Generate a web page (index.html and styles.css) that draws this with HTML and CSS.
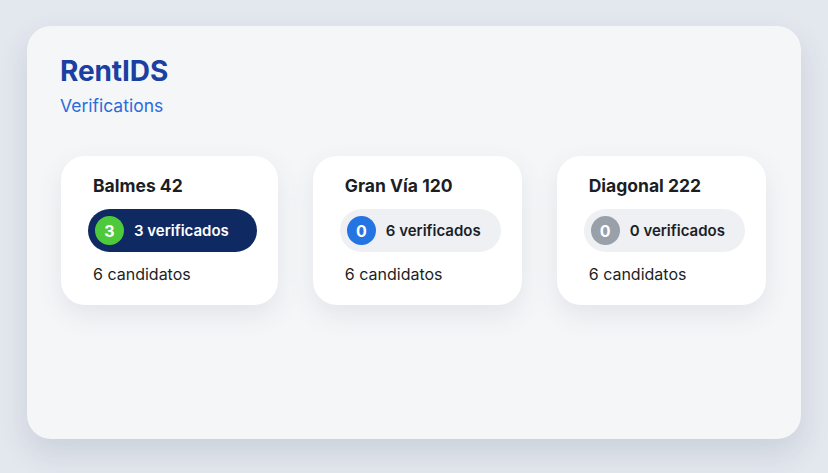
FILE: index.html
```html
<!DOCTYPE html>
<html lang="es">
<head>
<meta charset="utf-8">
<title>RentIDS</title>
<link rel="stylesheet" href="styles.css">
</head>
<body>
  <main class="panel">
    <h1 class="brand">RentIDS</h1>
    <p class="subtitle">Verifications</p>
    <section class="cards">
      <article class="card">
        <h2 class="card-title">Balmes 42</h2>
        <div class="pill pill-active">
          <span class="dot dot-green">3</span>
          <span class="pill-text">3 verificados</span>
        </div>
        <p class="count">6 candidatos</p>
      </article>
      <article class="card">
        <h2 class="card-title">Gran Vía 120</h2>
        <div class="pill">
          <span class="dot dot-blue">0</span>
          <span class="pill-text">6 verificados</span>
        </div>
        <p class="count">6 candidatos</p>
      </article>
      <article class="card">
        <h2 class="card-title">Diagonal 222</h2>
        <div class="pill">
          <span class="dot dot-gray">0</span>
          <span class="pill-text">0 verificados</span>
        </div>
        <p class="count">6 candidatos</p>
      </article>
    </section>
  </main>
</body>
</html>
```

FILE: styles.css
```css
* { box-sizing: border-box; }
html, body { height: 100%; }
body {
  margin: 0;
  padding: 26px 27px 0 27px;
  background: #e3e7ee;
  font-family: Inter, "Noto Sans", "Liberation Sans", sans-serif;
}
.panel {
  height: 413px;
  background: #f5f6f8;
  border-radius: 24px;
  padding: 28px 34px 0 33px;
  box-shadow: 0 14px 30px rgba(60, 75, 105, 0.14);
}
.brand {
  margin: 0;
  font-size: 28px;
  line-height: 34px;
  font-weight: 700;
  color: #1a40a2;
  letter-spacing: -0.1px;
}
.subtitle {
  margin: 6px 0 0 0;
  font-size: 17.5px;
  line-height: 24px;
  color: #2b6bdb;
}
.cards {
  display: flex;
  gap: 35px;
  margin-top: 38px;
  padding-left: 1px;
  align-items: flex-start;
}
.card {
  background: #ffffff;
  border-radius: 24px;
  padding: 18px 21px 21px 32px;
  box-shadow: 0 10px 26px rgba(60, 75, 105, 0.10);
  white-space: nowrap;
}
.card-title {
  margin: 0;
  font-size: 17.5px;
  line-height: 24px;
  font-weight: 700;
  color: #1b1e25;
}
.pill {
  display: inline-flex;
  align-items: center;
  gap: 10px;
  height: 43px;
  margin: 11px 0 0 -5px;
  padding: 0 20px 0 7px;
  border-radius: 22px;
  background: #eef0f3;
  color: #1b1e25;
}
.pill-active {
  background: #0f2a63;
  color: #ffffff;
  padding-right: 28px;
}
.pill-text {
  font-size: 15px;
  font-weight: 600;
  line-height: 20px;
  white-space: nowrap;
}
.dot {
  flex: none;
  width: 29px;
  height: 29px;
  border-radius: 50%;
  display: flex;
  align-items: center;
  justify-content: center;
  color: #ffffff;
  font-size: 16px;
  font-weight: 700;
}
.dot-green { background: #4fc93c; }
.dot-blue { background: #2474e3; }
.dot-gray { background: #9aa0a9; }
.count {
  margin: 12px 0 0 0;
  font-size: 16px;
  line-height: 20px;
  color: #1b1e25;
}
```
